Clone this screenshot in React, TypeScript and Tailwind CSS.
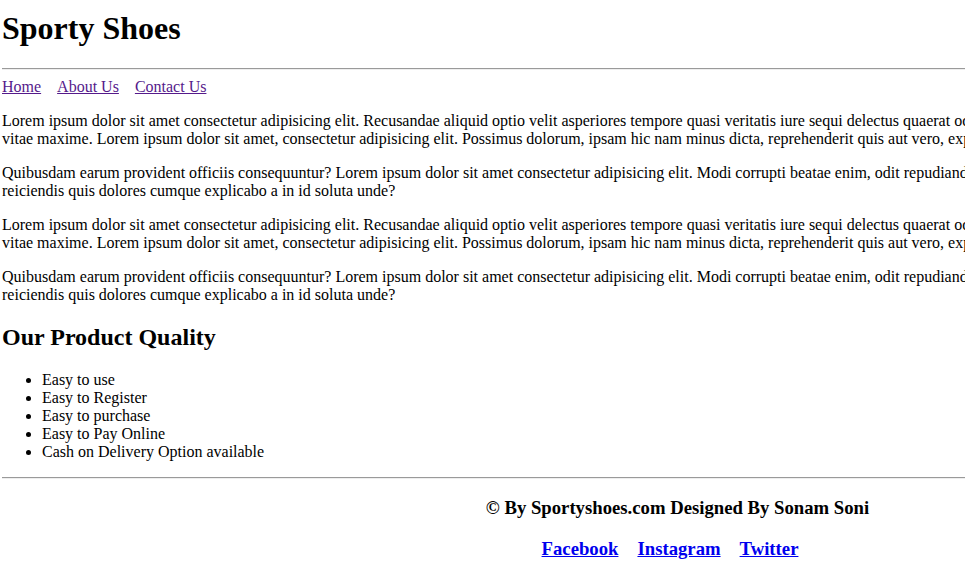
const qualities = [
  "Easy to use",
  "Easy to Register",
  "Easy to purchase",
  "Easy to Pay Online",
  "Cash on Delivery Option available",
];

function ParaA() {
  return (
    <p className="mt-4">
      Lorem ipsum dolor sit amet consectetur adipisicing elit. Recusandae aliquid optio velit asperiores tempore quasi
      veritatis iure sequi delectus quaerat odio, voluptatum nesciunt eligendi corporis aperiam
      <br />
      vitae maxime. Lorem ipsum dolor sit amet, consectetur adipisicing elit. Possimus dolorum, ipsam hic nam minus dicta,
      reprehenderit quis aut vero, expedita eius nobis.
    </p>
  );
}

function ParaB() {
  return (
    <p className="mt-4">
      Quibusdam earum provident officiis consequuntur? Lorem ipsum dolor sit amet consectetur adipisicing elit. Modi
      corrupti beatae enim, odit repudiandae sapiente nisi tempora, officia nulla
      <br />
      reiciendis quis dolores cumque explicabo a in id soluta unde?
    </p>
  );
}

function Rule() {
  return <hr className="h-0 border-0 border-t border-t-[#9a9a9a] border-b border-b-[#eeeeee]" />;
}

export default function App() {
  return (
    <div className="h-screen w-full overflow-hidden bg-white">
      <div className="w-[1355px] px-[2px] text-black text-base leading-[18px] font-['Liberation_Serif','Times_New_Roman',serif]">
        <h1 className="mt-[10px] mb-[21px] text-[32px] leading-[37px] font-bold">Sporty Shoes</h1>
        <Rule />
        <nav className="mt-2 flex gap-4 text-[#551a8b] leading-[18px]">
          <a href="#" className="underline">Home</a>
          <a href="#" className="underline">About Us</a>
          <a href="#" className="underline">Contact Us</a>
        </nav>
        <ParaA />
        <ParaB />
        <ParaA />
        <ParaB />
        <h2 className="mt-[19px] text-2xl leading-[28px] font-bold">Our Product Quality</h2>
        <ul className="mt-5 mb-4 list-disc pl-10">
          {qualities.map((q) => (
            <li key={q}>{q}</li>
          ))}
        </ul>
        <Rule />
        <footer className="text-center">
          <h3 className="mt-[18px] text-[18.72px] leading-[22px] font-bold">© By Sportyshoes.com Designed By Sonam Soni</h3>
          <h3 className="mt-[19px] text-[18.72px] leading-[22px] font-bold">
            <a href="#" className="mr-[19px] text-[#0000ee] underline">Facebook</a>
            <a href="#" className="mr-[19px] text-[#0000ee] underline">Instagram</a>
            <a href="#" className="mr-[15px] text-[#0000ee] underline">Twitter</a>
          </h3>
        </footer>
      </div>
    </div>
  );
}
